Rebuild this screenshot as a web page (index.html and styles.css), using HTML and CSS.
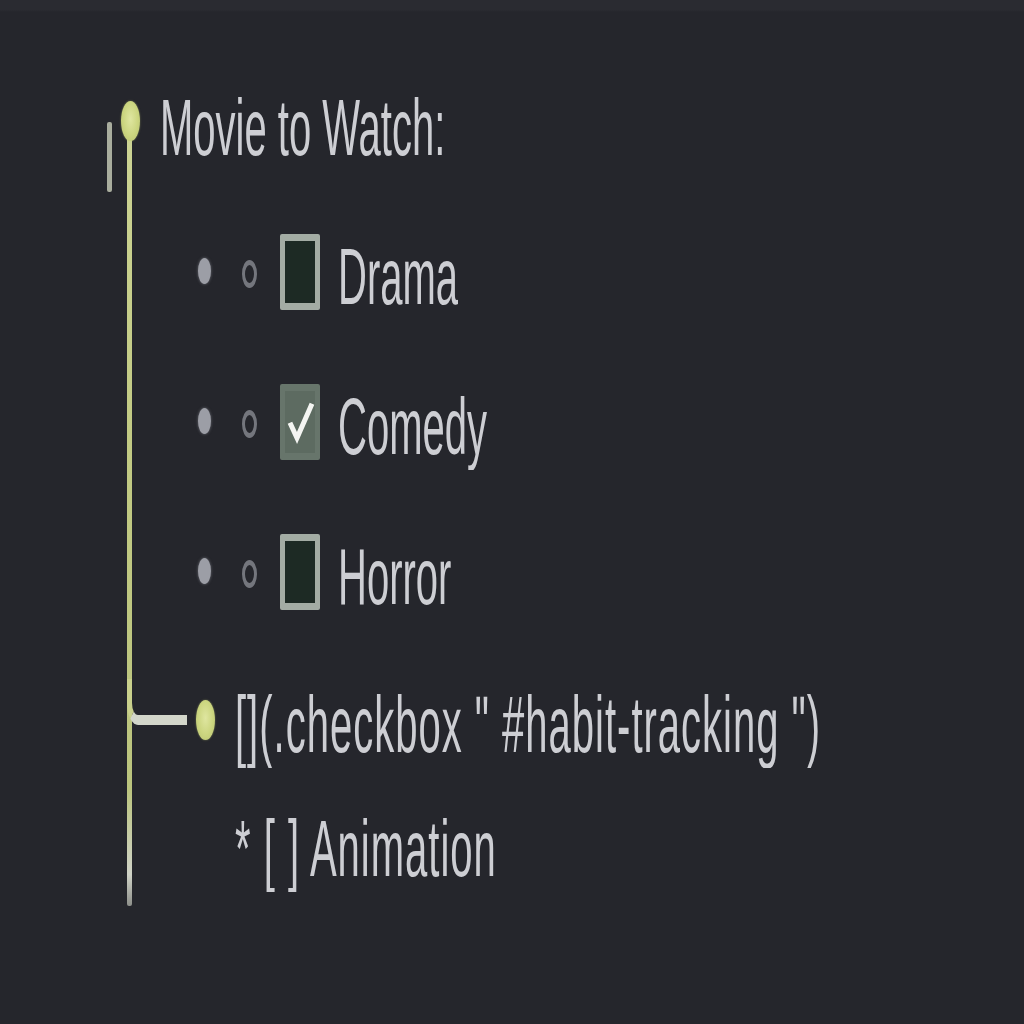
FILE: index.html
```html
<!DOCTYPE html>
<html lang="en">
<head>
<meta charset="utf-8">
<title>Movie to Watch</title>
<link rel="stylesheet" href="styles.css">
</head>
<body>
<div class="tree">
  <span class="side-mark"></span>
  <span class="rail"></span>
  <div class="heading">
    <span class="node node-top"></span>
    <span class="label">Movie to Watch:</span>
  </div>
  <ul class="options">
    <li class="option">
      <span class="bullet"></span><span class="ring"></span><span class="box"></span>
      <span class="label">Drama</span>
    </li>
    <li class="option">
      <span class="bullet"></span><span class="ring"></span>
      <span class="box box-checked"><svg class="tick" viewBox="0 0 30 62"><polyline points="6,34 12,47 26,15" /></svg></span>
      <span class="label">Comedy</span>
    </li>
    <li class="option">
      <span class="bullet"></span><span class="ring"></span><span class="box"></span>
      <span class="label">Horror</span>
    </li>
  </ul>
  <div class="branch-row">
    <span class="branch"></span>
    <span class="node"></span>
    <span class="label label-wide">[](.checkbox " #habit-tracking ")</span>
  </div>
  <div class="note"><span class="label label-wide">* [ ] Animation</span></div>
</div>
</body>
</html>
```

FILE: styles.css
```css
html, body {
  margin: 0;
  padding: 0;
  background: #25262c;
}

body {
  width: 1024px;
  height: 1024px;
  overflow: hidden;
  font-family: "Liberation Sans", Arial, sans-serif;
  color: #cdced3;
  background: linear-gradient(to bottom, #2a2b31 0, #2a2b31 10px, #25262c 12px);
}

.tree {
  position: relative;
  padding-top: 82px;
  font-size: 40px;
  line-height: 45px;
}

/* tall, narrow lettering of the original */
.label {
  display: inline-block;
  white-space: nowrap;
  transform: scaleY(2);
  transform-origin: 50% 50%;
}

.label-wide {
  letter-spacing: 1px;
}

.side-mark {
  position: absolute;
  left: 107px;
  top: 122px;
  width: 5px;
  height: 70px;
  border-radius: 2px;
  background: #a9ad9e;
}

.rail {
  position: absolute;
  left: 127px;
  top: 120px;
  width: 5px;
  height: 786px;
  border-radius: 0 0 2px 2px;
  background: linear-gradient(to bottom, #cdd495 0, #c2ca84 40%, #bbc47e 85%, #cfd2c6 96%, #8d8f8a 100%);
}

.heading {
  display: flex;
  align-items: center;
  height: 90px;
  margin-left: 121px;
}

.node {
  flex: none;
  width: 19px;
  height: 40px;
  border-radius: 50%;
  background: radial-gradient(ellipse at 50% 45%, #dfe6a0 0, #cbd57f 55%, #b6c070 100%);
  box-shadow: 0 0 2px rgba(200, 210, 120, 0.5);
}

.node-top {
  position: relative;
  z-index: 1;
  align-self: flex-start;
  margin-top: 19px;
  margin-right: 20px;
}

.options {
  list-style: none;
  margin: 59px 0 0 198px;
  padding: 0;
  display: flex;
  flex-direction: column;
  gap: 60px;
}

.option {
  display: flex;
  align-items: center;
  height: 90px;
}

.bullet {
  flex: none;
  width: 13px;
  height: 26px;
  margin-top: -10px;
  border-radius: 50%;
  background: #9c9ea6;
  box-shadow: 0 0 3px rgba(156, 158, 166, 0.6);
}

.ring {
  flex: none;
  box-sizing: border-box;
  width: 15px;
  height: 28px;
  margin-left: 31px;
  margin-top: -4px;
  border: solid #74767d;
  border-width: 5px 3px;
  border-radius: 50%;
}

.box {
  flex: none;
  box-sizing: border-box;
  width: 40px;
  height: 76px;
  margin-left: 23px;
  margin-top: -8px;
  border: solid #a3aca4;
  border-width: 7px 5px;
  border-radius: 2px;
  background: #1d2a24;
  display: flex;
  align-items: center;
  justify-content: center;
}

.box-checked {
  border-color: #67756b;
  background: #5d6b61;
}

.tick {
  width: 30px;
  height: 62px;
}

.tick polyline {
  fill: none;
  stroke: #f4f5f2;
  stroke-width: 5;
  stroke-linecap: square;
  stroke-linejoin: miter;
}

.option .label {
  margin-left: 18px;
}

.branch-row {
  position: relative;
  display: flex;
  align-items: center;
  height: 90px;
  margin: 58px 0 0 196px;
}

.branch {
  position: absolute;
  left: -69px;
  top: 0;
  box-sizing: border-box;
  width: 60px;
  height: 46px;
  border-left: 5px solid #c9d08c;
  border-bottom: 10px solid #d3d6ca;
  border-bottom-left-radius: 11px 22px;
}

.branch-row .node {
  margin-top: -8px;
  margin-right: 20px;
}

.note {
  display: flex;
  align-items: center;
  height: 90px;
  margin: 34px 0 0 235px;
}
```
